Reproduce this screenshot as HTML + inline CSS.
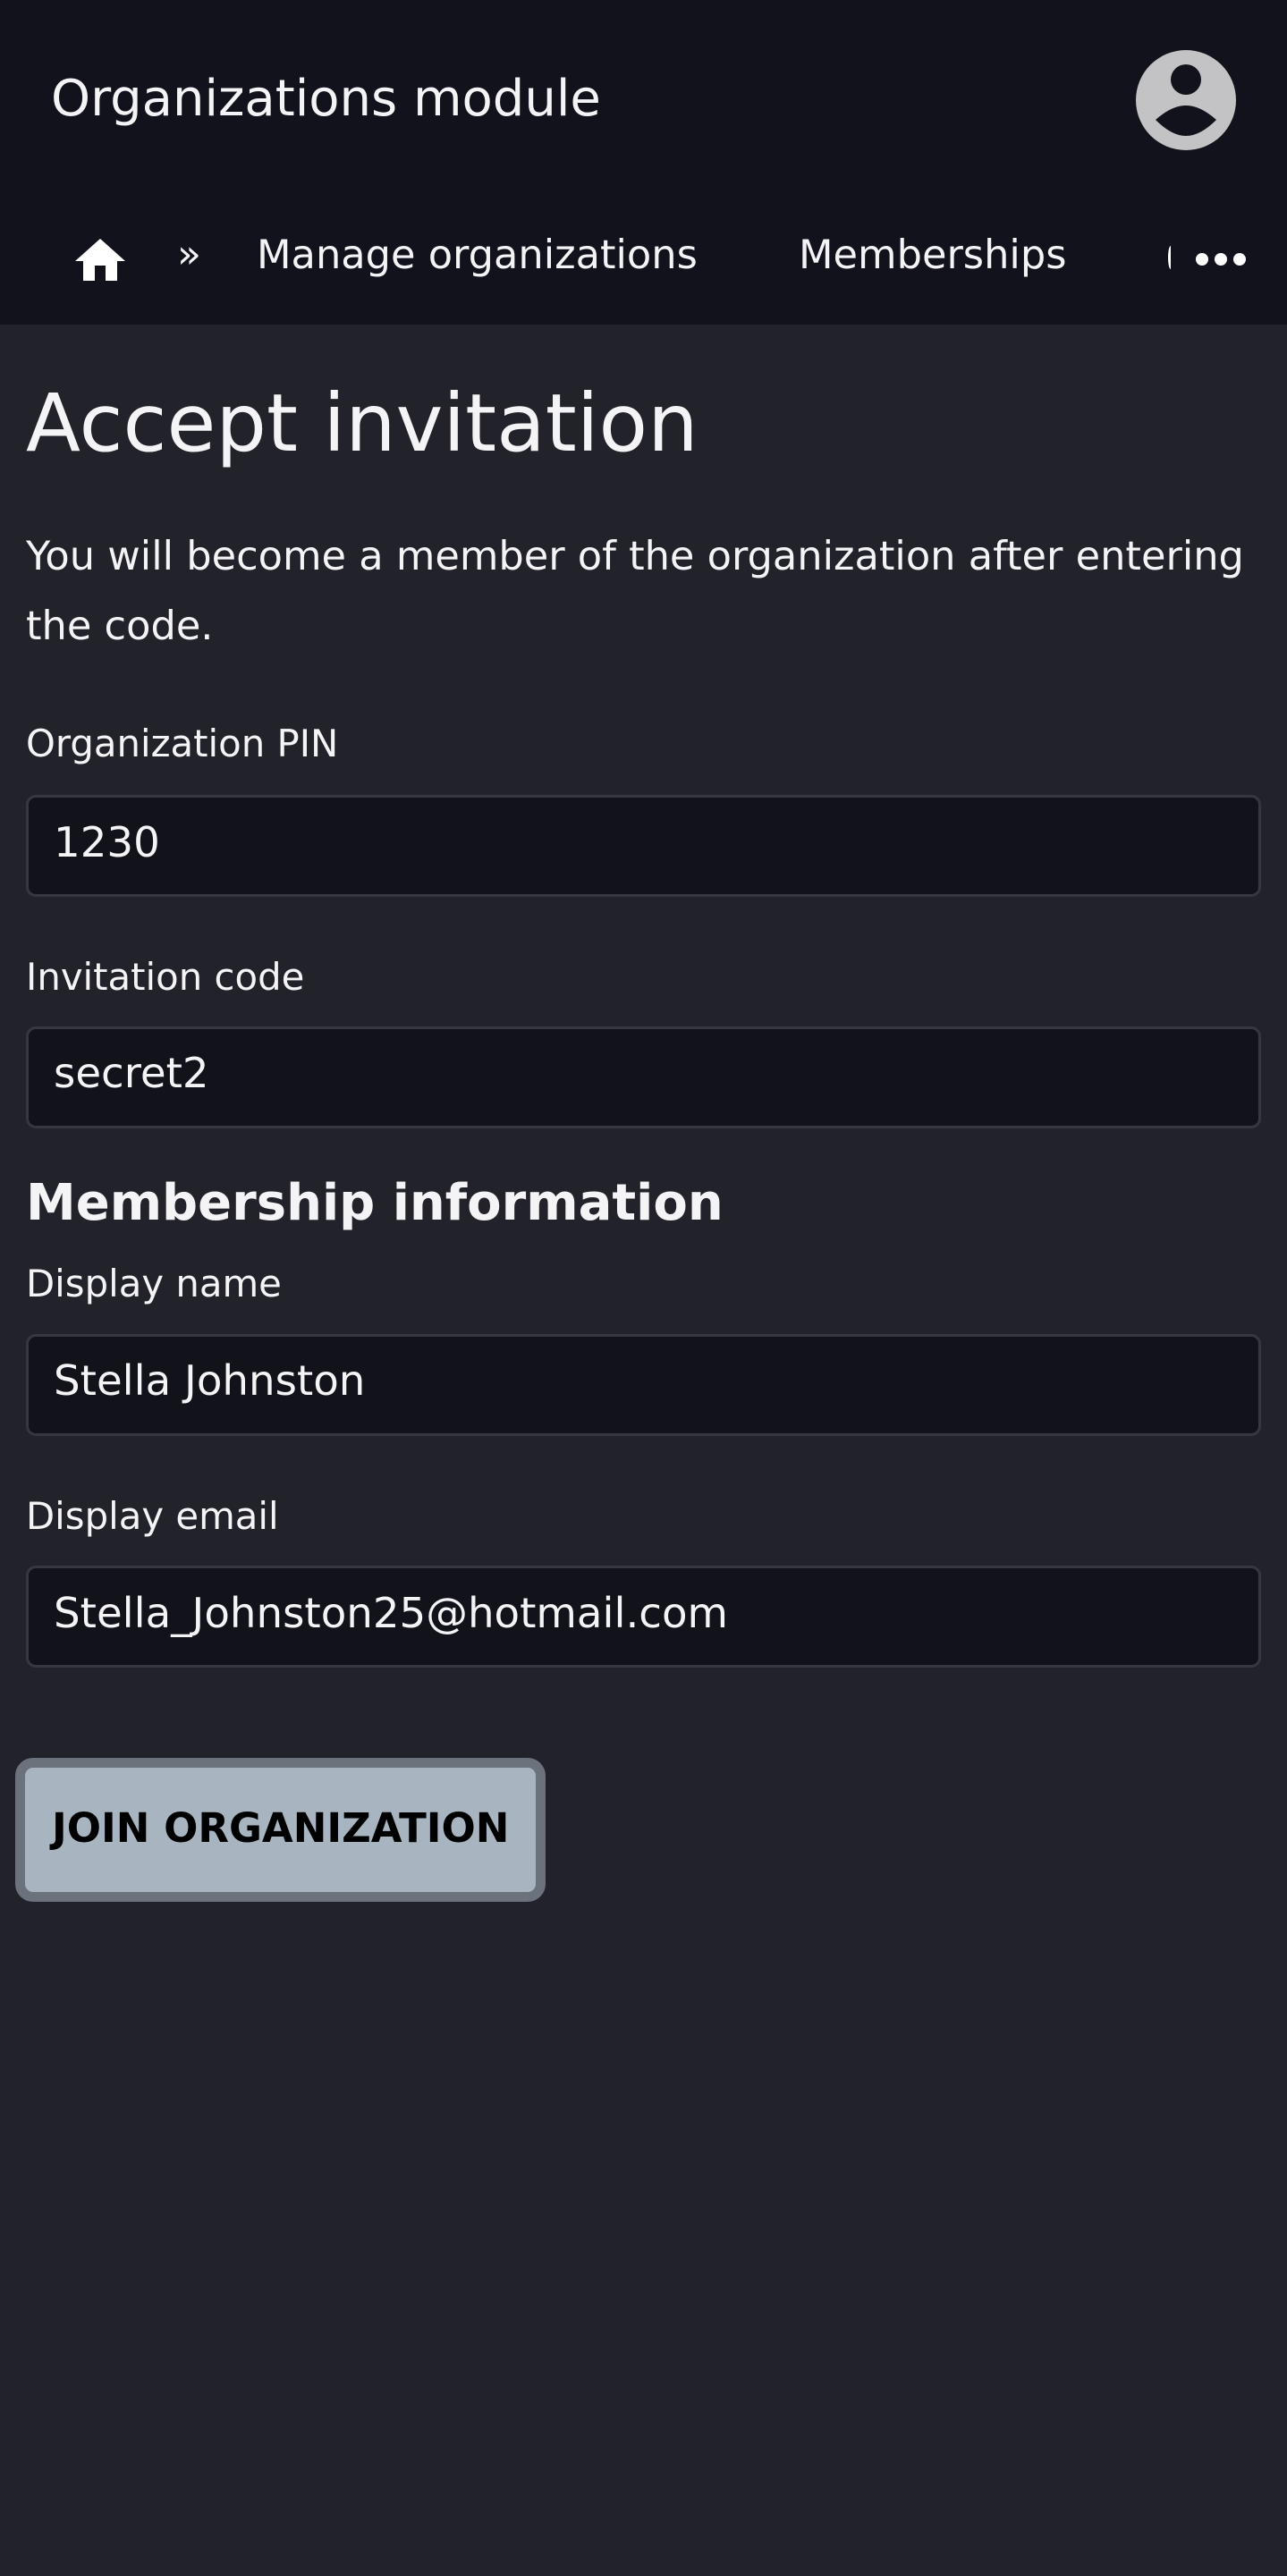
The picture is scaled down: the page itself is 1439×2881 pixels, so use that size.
<!DOCTYPE html>
<html><head><meta charset="utf-8"><style>
*{margin:0;padding:0;box-sizing:border-box}
html,body{width:1439px;height:2881px;background:#22222b;overflow:hidden}
body{position:relative;font-family:"DejaVu Sans","Liberation Sans",sans-serif;color:#f4f4f6}
.a{position:absolute;white-space:nowrap;line-height:1}
.hdr{position:absolute;left:0;top:0;width:1439px;height:363px;background:#12121c}
.inp{position:absolute;left:29px;width:1381px;height:114px;background:#12121b;border:3px solid #353841;border-radius:11px}
.lbl{font-size:41.8px;left:29px}
.val{font-size:46.7px;left:60px}
</style></head><body>
<div class="hdr"></div>
<div class="a" style="left:57px;top:83px;font-size:56px">Organizations module</div>
<svg class="a" style="left:1270px;top:56px" width="112" height="112" viewBox="0 0 112 112">
<circle cx="56" cy="56" r="56" fill="#c3c3c5"/>
<circle cx="56" cy="33" r="17" fill="#12121c"/>
<path d="M22 78 Q40 62 56 62 Q72 62 90 78 Q72 96 56 96 Q40 96 22 78 Z" fill="#12121c"/>
</svg>
<svg class="a" style="left:84px;top:266px" width="58" height="50" viewBox="0 0 58 50">
<path d="M28 1 L56 26 L47 26 L47 48 L34 48 L34 31 L22 31 L22 48 L9 48 L9 26 L0 26 Z" fill="#fff"/>
</svg>
<div class="a" style="left:198px;top:263px;font-size:44px">»</div>
<div class="a" style="left:287px;top:263px;font-size:44.7px">Manage organizations</div>
<div class="a" style="left:893px;top:263px;font-size:44.7px">Memberships</div>
<div class="a" style="left:1306px;top:275px;width:6px;height:26px;border-left:3px solid #fff;border-radius:50% 0 0 50%"></div>
<svg class="a" style="left:1335px;top:282px" width="60" height="16" viewBox="0 0 60 16">
<circle cx="9" cy="8" r="7" fill="#fff"/><circle cx="30" cy="8" r="7" fill="#fff"/><circle cx="51" cy="8" r="7" fill="#fff"/>
</svg>

<div class="a" style="left:29px;top:430px;font-size:89.2px">Accept invitation</div>
<div class="a" style="left:29px;top:600px;font-size:44.7px">You will become a member of the organization after entering</div>
<div class="a" style="left:29px;top:678px;font-size:44.7px">the code.</div>

<div class="a lbl" style="top:811px">Organization PIN</div>
<div class="inp" style="top:889px"></div>
<div class="a val" style="top:920px">1230</div>

<div class="a lbl" style="top:1072px">Invitation code</div>
<div class="inp" style="top:1148px"></div>
<div class="a val" style="top:1178px">secret2</div>

<div class="a" style="left:29px;top:1318px;font-size:56px;font-weight:bold">Membership information</div>

<div class="a lbl" style="top:1415px">Display name</div>
<div class="inp" style="top:1492px"></div>
<div class="a val" style="top:1522px">Stella Johnston</div>

<div class="a lbl" style="top:1675px">Display email</div>
<div class="inp" style="top:1751px"></div>
<div class="a val" style="top:1782px">Stella_Johnston25@hotmail.com</div>

<div class="a" style="left:17px;top:1966px;width:593px;height:161px;background:#a8b4c0;border:11px solid #6b727c;border-radius:20px"></div>
<div class="a" style="left:58px;top:2022px;font-size:45px;font-weight:bold;color:#000">JOIN ORGANIZATION</div>
</body></html>
